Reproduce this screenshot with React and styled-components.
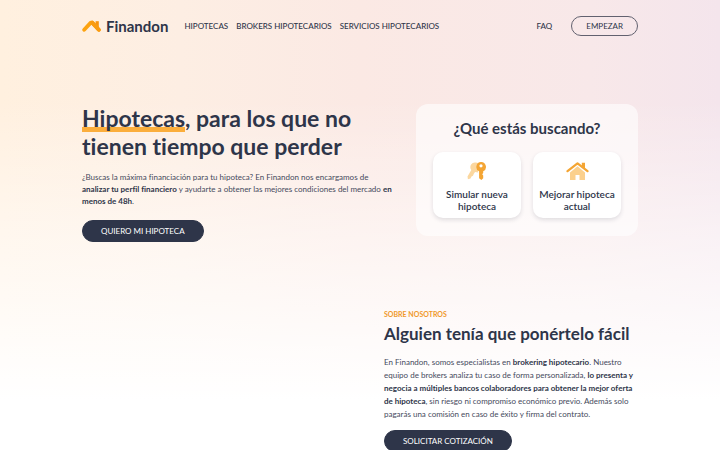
import React from 'react';
import styled, { createGlobalStyle } from 'styled-components';

const GlobalStyle = createGlobalStyle`
  * {
    box-sizing: border-box;
  }
  body {
    margin: 0;
    font-family: Lato, 'Open Sans', sans-serif;
    font-variant-ligatures: none;
    color: #2e3549;
    background: #fff;
  }
  h1, h2, p {
    margin: 0;
  }
`;

const Page = styled.div`
  min-height: 100vh;
  background:
    linear-gradient(180deg, rgba(255, 255, 255, 0) 100px, rgba(255, 255, 255, 0.5) 240px, #fff 400px),
    linear-gradient(90deg, #fff0df 0%, #fdeee3 25%, #fbe9e4 50%, #f8e8e9 82%, #f4e5ec 100%);
`;

const Container = styled.div`
  max-width: 588px;
  margin: 0 auto;
  padding: 0 16px;
`;

const Header = styled.header`
  display: flex;
  align-items: center;
  padding-top: 16px;
`;

const Logo = styled.a`
  display: flex;
  align-items: center;
  gap: 5px;
  margin-right: 16px;
  font-size: 15px;
  line-height: 20px;
  font-weight: 700;
  color: #2e3549;
  text-decoration: none;
`;

const Nav = styled.nav`
  display: flex;
  flex: 1;
  gap: 8px;
`;

const NavLink = styled.a`
  font-size: 8px;
  line-height: 12px;
  font-weight: 500;
  color: #2e3549;
  text-decoration: none;
  white-space: nowrap;

  &:last-child {
    margin-left: ${(props) => (props.$end ? 'auto' : '0')};
  }
`;

const Button = styled.button`
  height: ${(props) => (props.$outline ? '20px' : '22px')};
  padding: 0 ${(props) => (props.$outline ? '14px' : '18px')};
  margin-left: ${(props) => (props.$outline ? '19px' : '0')};
  border: 1px solid ${(props) => (props.$outline ? '#62616f' : '#2e3549')};
  border-radius: 11px;
  background: ${(props) => (props.$outline ? 'transparent' : '#2e3549')};
  color: ${(props) => (props.$outline ? '#2e3549' : '#fff')};
  font-family: inherit;
  font-size: 8px;
  white-space: nowrap;
  cursor: pointer;
`;

const Hero = styled.section`
  display: grid;
  grid-template-columns: 1fr 222px;
  align-items: start;
  gap: 16px;
  padding-top: 68px;
`;

const Title = styled.h1`
  font-size: 23px;
  line-height: 28px;
  font-weight: 700;

  span {
    background: linear-gradient(#fbae3c, #fbae3c) 0 100% / 100% 5px no-repeat;
  }
`;

const Text = styled.p`
  margin-top: 11px;
  margin-bottom: 11px;
  font-size: 8px;
  line-height: 12px;
  color: #454a5c;

  b {
    color: #2e3549;
  }
`;

const Card = styled.div`
  padding: 14px 17px 18px;
  border-radius: 12px;
  background: rgba(255, 255, 255, 0.6);
`;

const CardTitle = styled.h2`
  font-size: 15px;
  line-height: 20px;
  font-weight: 700;
  text-align: center;
`;

const Options = styled.div`
  display: grid;
  grid-template-columns: 1fr 1fr;
  gap: 12px;
  margin-top: 14px;
`;

const Option = styled.button`
  display: flex;
  flex-direction: column;
  align-items: center;
  gap: 8px;
  padding: 10px 4px 6px;
  border: 0;
  border-radius: 10px;
  background: #fff;
  box-shadow: 0 2px 4px rgba(46, 53, 73, 0.14);
  color: #2e3549;
  font-family: inherit;
  font-size: 10px;
  line-height: 12px;
  font-weight: 600;
  cursor: pointer;
`;

const About = styled.section`
  display: grid;
  grid-template-columns: 1fr 254px;
  gap: 48px;
  padding: 67px 0 40px;
`;

const AboutContent = styled.div`
  grid-column: 2;
`;

const Label = styled.p`
  font-size: 7px;
  line-height: 10px;
  font-weight: 700;
  color: #f0982a;
`;

const Subtitle = styled.h2`
  margin-top: 4px;
  font-size: 17px;
  line-height: 22px;
  font-weight: 700;
`;

const AboutText = styled(Text)`
  margin-bottom: 7px;
  line-height: 13px;
`;

function RoofLogo() {
  return (
    <svg width="19" height="12" viewBox="0 0 19 12" aria-hidden="true">
      <path d="M13.6 1.2h3.2v7h-3.2z" fill="#f7930f" />
      <path d="M2.2 9.8 8.8 2.6h1.4l6.6 7.2" fill="none" stroke="#fca311" strokeWidth="3.8" strokeLinecap="round" strokeLinejoin="round" />
      <path d="M10.2 2.6 16.8 9.8" fill="none" stroke="#f99b12" strokeWidth="3.8" strokeLinecap="round" />
    </svg>
  );
}

function KeysIcon() {
  return (
    <svg width="20" height="18" viewBox="0 0 20 18" aria-hidden="true">
      <path fill="#fbd79f" d="M9 .5a4.7 4.7 0 0 0-4.7 7.4L.5 14.5l.4 2.7 2.6-.6 1-2.2 1.5-.6.8-2.1 1.3-1.6 3 .3V1z" />
      <path fill="#f4a533" fillRule="evenodd" d="M14 0a4.9 4.9 0 0 1 2.2 9.3V11l-1 1.2 1 1.3v2.7L14.4 18l-2.3-1.7v-7A4.9 4.9 0 0 1 14 0zm0 2.2a1.6 1.6 0 1 0 0 3.2 1.6 1.6 0 0 0 0-3.2z" />
    </svg>
  );
}

function HouseIcon() {
  return (
    <svg width="23" height="18" viewBox="0 0 23 18" aria-hidden="true">
      <path d="M11.5 4.2 19 10.5V18h-5.5v-5h-4v5H4v-7.5z" fill="#fbd08d" />
      <path d="M15.8.8H19v6l-3.2-3z" fill="#f4a533" />
      <path d="M1.5 9.2l10-7.9 10 7.9" fill="none" stroke="#f4a533" strokeWidth="2.2" strokeLinecap="round" strokeLinejoin="round" />
    </svg>
  );
}

export default function App() {
  return (
    <Page>
      <GlobalStyle />
      <Container>
        <Header>
          <Logo href="#">
            <RoofLogo />
            Finandon
          </Logo>
          <Nav>
            <NavLink href="#">HIPOTECAS</NavLink>
            <NavLink href="#">BROKERS HIPOTECARIOS</NavLink>
            <NavLink href="#">SERVICIOS HIPOTECARIOS</NavLink>
            <NavLink href="#" $end>FAQ</NavLink>
          </Nav>
          <Button $outline>EMPEZAR</Button>
        </Header>
        <Hero>
          <div>
            <Title>
              <span>Hipotecas</span>, para los que no
              <br />
              tienen tiempo que perder
            </Title>
            <Text>
              ¿Buscas la máxima financiación para tu hipoteca? En Finandon nos encargamos de
              <br />
              <b>analizar tu perfil financiero</b> y ayudarte a obtener las mejores condiciones del mercado{' '}
              <b>
                en
                <br />
                menos de 48h
              </b>
              .
            </Text>
            <Button>QUIERO MI HIPOTECA</Button>
          </div>
          <Card>
            <CardTitle>¿Qué estás buscando?</CardTitle>
            <Options>
              <Option>
                <KeysIcon />
                Simular nueva hipoteca
              </Option>
              <Option>
                <HouseIcon />
                Mejorar hipoteca actual
              </Option>
            </Options>
          </Card>
        </Hero>
        <About>
          <AboutContent>
            <Label>SOBRE NOSOTROS</Label>
            <Subtitle>Alguien tenía que ponértelo fácil</Subtitle>
            <AboutText>
              En Finandon, somos especialistas en <b>brokering hipotecario</b>. Nuestro
              <br />
              equipo de brokers analiza tu caso de forma personalizada, <b>lo presenta y</b>
              <br />
              <b>negocia a múltiples bancos colaboradores para obtener la mejor oferta</b>
              <br />
              <b>de hipoteca</b>, sin riesgo ni compromiso económico previo. Además solo
              <br />
              pagarás una comisión en caso de éxito y firma del contrato.
            </AboutText>
            <Button>SOLICITAR COTIZACIÓN</Button>
          </AboutContent>
        </About>
      </Container>
    </Page>
  );
}
